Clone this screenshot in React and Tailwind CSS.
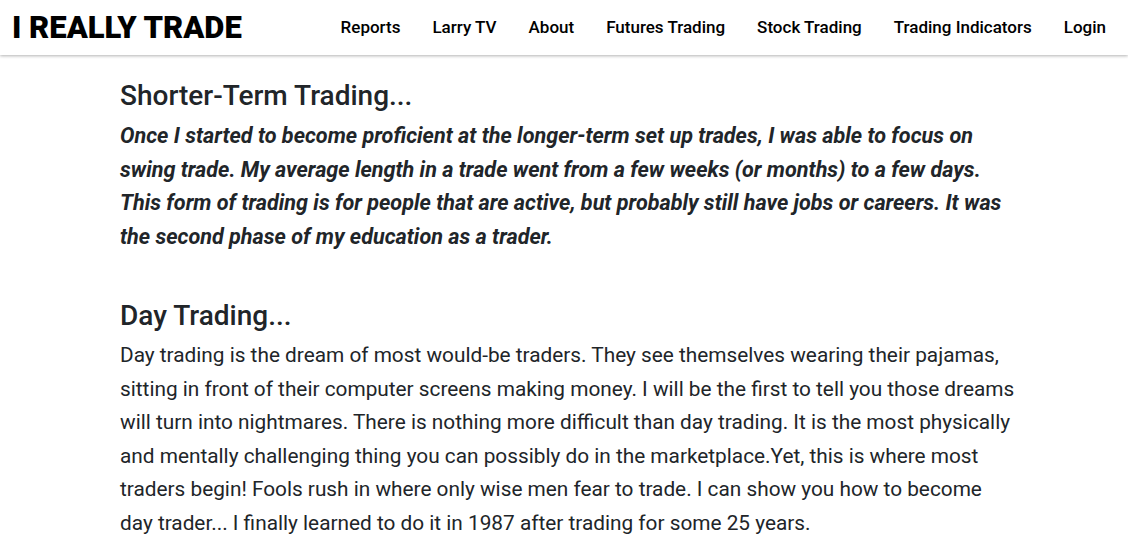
export default function App() {
  const nav = ["Reports", "Larry TV", "About", "Futures Trading", "Stock Trading", "Trading Indicators", "Login"];

  return (
    <div className="min-h-screen bg-white text-[#212529] font-['Roboto',sans-serif]">
      <header className="h-[55px] flex items-center justify-between pl-3 pr-[22px] bg-white shadow-[0_1px_3px_rgba(0,0,0,0.3)]">
        <a className="text-[31px] font-black text-black leading-none">I REALLY TRADE</a>
        <nav className="flex items-center gap-8">
          {nav.map((item) => (
            <a key={item} className="text-[17px] font-medium text-black">
              {item}
            </a>
          ))}
        </nav>
      </header>

      <main className="pl-[120px] w-[1018px]">
        {/* Shorter-term */}
        <section className="pt-6">
          <h2 className="text-[28px] font-medium leading-[34px] mb-[6px]">Shorter-Term Trading...</h2>
          <p className="text-[21.6px] font-bold italic leading-[33.5px]">
            Once I started to become proficient at the longer-term set up trades, I was able to focus on swing trade. My
            average length in a trade went from a few weeks (or months) to a few days. This form of trading is for
            people that are active, but probably still have jobs or careers. It was the second phase of my education as
            a trader.
          </p>
        </section>

        {/* Day trading */}
        <section className="pt-[46px]">
          <h2 className="text-[28px] font-medium leading-[34px] mb-[6px]">Day Trading...</h2>
          <p className="text-[20.8px] leading-[33.5px]">
            Day trading is the dream of most would-be traders. They see themselves wearing their pajamas, sitting in
            front of their computer screens making money. I will be the first to tell you those dreams will turn into
            nightmares. There is nothing more difficult than day trading. It is the most physically and mentally
            challenging thing you can possibly do in the marketplace.Yet, this is where most traders begin! Fools rush
            in where only wise men fear to trade. I can show you how to become day trader... I finally learned to do it
            in 1987 after trading for some 25 years.
          </p>
        </section>
      </main>
    </div>
  );
}
